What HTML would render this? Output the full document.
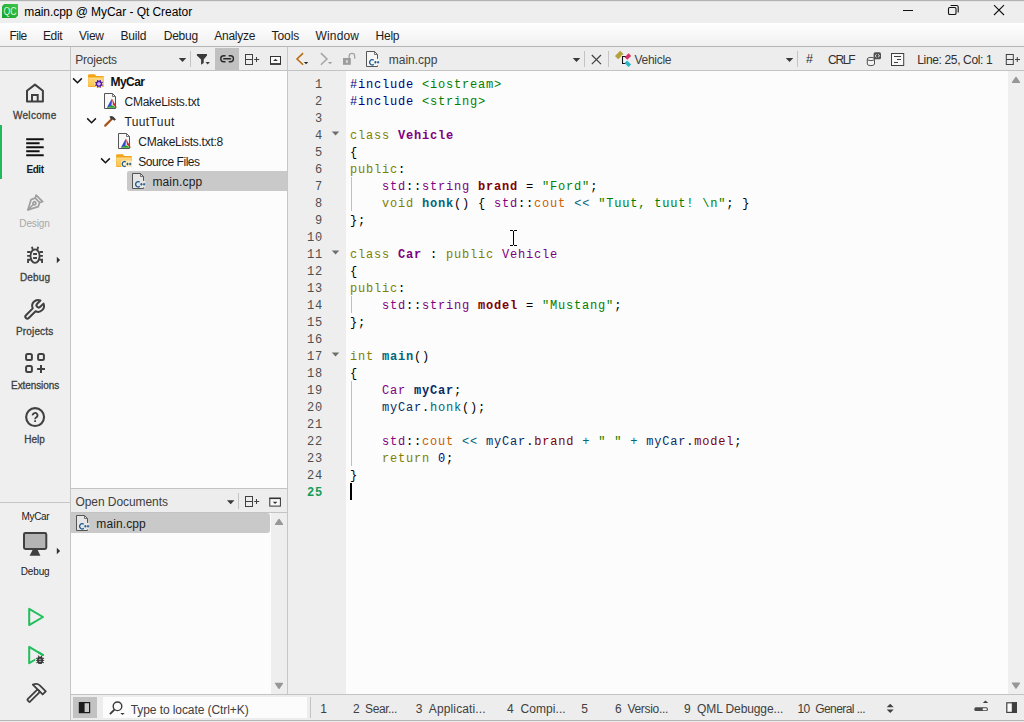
<!DOCTYPE html>
<html>
<head>
<meta charset="utf-8">
<title>main.cpp @ MyCar - Qt Creator</title>
<style>
*{margin:0;padding:0;box-sizing:border-box;}
html,body{width:1024px;height:722px;overflow:hidden;background:#efefef;}
body{position:relative;font-family:"Liberation Sans",sans-serif;font-size:12px;color:#1c1c1c;}
.a{position:absolute;}
.t{position:absolute;white-space:pre;}
svg{position:absolute;overflow:visible;}
.ln{position:absolute;left:288px;width:35px;text-align:right;font-family:"Liberation Mono",monospace;font-size:12px;letter-spacing:0.8px;line-height:17px;height:17px;color:#4f4f4f;white-space:pre;}
.cl{position:absolute;left:350px;font-family:"Liberation Mono",monospace;font-size:12px;letter-spacing:0.8px;line-height:17px;height:17px;color:#000000;white-space:pre;}
.cl b{font-weight:bold;}
.k{color:#808000;}.p{color:#000080;}.s{color:#008000;}.ty{color:#800080;}.f{color:#00677c;}.fl{color:#800000;}.g{color:#ce5c00;}.lo{color:#092e64;}.n{color:#000080;}
</style>
</head>
<body>
<div class="a" style="left:0px;top:0px;width:1024px;height:23px;background:#eeeeee;"></div>
<div class="a" style="left:0px;top:0px;width:1024px;height:1px;background:#b2b2b2;"></div>
<div class="a" style="left:0px;top:1px;width:1024px;height:1px;background:#e6e6e6;"></div>
<div class="a" style="left:0px;top:23px;width:1024px;height:23px;background:linear-gradient(#ffffff,#f0f0f0);"></div>
<div class="a" style="left:0px;top:46px;width:1024px;height:1px;background:#b6b6b6;"></div>
<div class="a" style="left:0px;top:47px;width:70px;height:675px;background:#efefef;"></div>
<div class="a" style="left:70px;top:47px;width:1px;height:674px;background:#c6c6c6;"></div>
<div class="a" style="left:71px;top:47px;width:953px;height:23px;background:#ededed;"></div>
<div class="a" style="left:0px;top:70px;width:1024px;height:1px;background:#c3c3c3;"></div>
<div class="a" style="left:215px;top:48px;width:24px;height:22px;background:#c1c1c1;"></div>
<div class="a" style="left:71px;top:71px;width:216px;height:417px;background:#fcfcfc;"></div>
<div class="a" style="left:127px;top:171px;width:160px;height:20px;background:#c9c9c9;border-radius:2px 0 0 2px;"></div>
<div class="a" style="left:71px;top:488px;width:216px;height:1px;background:#c3c3c3;"></div>
<div class="a" style="left:71px;top:489px;width:216px;height:23px;background:#ededed;"></div>
<div class="a" style="left:71px;top:512px;width:216px;height:1px;background:#c3c3c3;"></div>
<div class="a" style="left:71px;top:513px;width:200px;height:181px;background:#fcfcfc;"></div>
<div class="a" style="left:71px;top:513px;width:199px;height:20px;background:#c9c9c9;border-radius:0 3px 3px 0;"></div>
<div class="a" style="left:271px;top:513px;width:16px;height:181px;background:#eeeeee;"></div>
<div class="a" style="left:287px;top:47px;width:1px;height:647px;background:#c6c6c6;"></div>
<div class="a" style="left:288px;top:71px;width:58px;height:623px;background:#eeeeee;"></div>
<div class="a" style="left:346px;top:71px;width:662px;height:623px;background:#fcfcfc;"></div>
<div class="a" style="left:1008px;top:71px;width:16px;height:623px;background:#efefef;"></div>
<div class="a" style="left:71px;top:694px;width:953px;height:1px;background:#c3c3c3;"></div>
<div class="a" style="left:71px;top:695px;width:953px;height:25px;background:#ededed;"></div>
<div class="a" style="left:73px;top:697px;width:24px;height:21px;background:#c2c2c2;"></div>
<div class="a" style="left:103px;top:697px;width:204px;height:21px;background:#fcfcfc;"></div>
<div class="a" style="left:310px;top:697px;width:1px;height:21px;background:#c4c4c4;"></div>
<div class="a" style="left:0px;top:720px;width:1024px;height:1px;background:#b6b6b6;"></div>
<div class="a" style="left:0px;top:721px;width:1024px;height:1px;background:#eaeaea;"></div>
<div class="a" style="left:0px;top:125px;width:2px;height:54px;background:#20b95e;"></div>
<div class="a" style="left:0px;top:502px;width:70px;height:1px;background:#c6c6c6;"></div>
<div class="a" style="left:190px;top:51px;width:1px;height:16px;background:#c4c4c4;"></div>
<div class="a" style="left:584px;top:51px;width:1px;height:16px;background:#c4c4c4;"></div>
<div class="a" style="left:608px;top:51px;width:1px;height:16px;background:#c4c4c4;"></div>
<div class="a" style="left:797px;top:51px;width:1px;height:16px;background:#c4c4c4;"></div>
<div class="a" style="left:238px;top:493px;width:1px;height:16px;background:#c4c4c4;"></div>
<div class="a" style="left:351px;top:177px;width:1px;height:34px;background:#c0c0c0;"></div>
<div class="a" style="left:351px;top:296px;width:1px;height:17px;background:#c0c0c0;"></div>
<div class="a" style="left:351px;top:381px;width:1px;height:85px;background:#c0c0c0;"></div>
<div class="a" style="left:350px;top:483px;width:2px;height:17px;background:#000000;"></div>

<!-- text -->
<div class="t" style="left:24.20px;top:4.84px;font-size:12px;line-height:14px;height:14px;letter-spacing:-0.056px;color:#000;">main.cpp @ MyCar - Qt Creator</div>
<div class="t" style="left:9.40px;top:28.84px;font-size:12px;line-height:14px;height:14px;letter-spacing:-0.481px;">File</div>
<div class="t" style="left:43.00px;top:28.84px;font-size:12px;line-height:14px;height:14px;letter-spacing:-0.396px;">Edit</div>
<div class="t" style="left:79.00px;top:28.84px;font-size:12px;line-height:14px;height:14px;letter-spacing:-0.266px;">View</div>
<div class="t" style="left:120.50px;top:28.84px;font-size:12px;line-height:14px;height:14px;letter-spacing:-0.172px;">Build</div>
<div class="t" style="left:163.70px;top:28.84px;font-size:12px;line-height:14px;height:14px;letter-spacing:-0.219px;">Debug</div>
<div class="t" style="left:214.20px;top:28.84px;font-size:12px;line-height:14px;height:14px;letter-spacing:-0.234px;">Analyze</div>
<div class="t" style="left:271.50px;top:28.84px;font-size:12px;line-height:14px;height:14px;letter-spacing:-0.054px;">Tools</div>
<div class="t" style="left:315.50px;top:28.84px;font-size:12px;line-height:14px;height:14px;letter-spacing:0.163px;">Window</div>
<div class="t" style="left:375.50px;top:28.84px;font-size:12px;line-height:14px;height:14px;letter-spacing:-0.229px;">Help</div>
<div class="t" style="left:75.30px;top:52.84px;font-size:12px;line-height:14px;height:14px;letter-spacing:-0.223px;color:#404040;">Projects</div>
<div class="t" style="left:388.70px;top:52.84px;font-size:12px;line-height:14px;height:14px;letter-spacing:0.014px;color:#404040;">main.cpp</div>
<div class="t" style="left:634.50px;top:52.84px;font-size:12px;line-height:14px;height:14px;letter-spacing:-0.284px;color:#404040;">Vehicle</div>
<div class="t" style="left:806.00px;top:52.17px;font-size:12.5px;line-height:15px;height:15px;color:#303030;">#</div>
<div class="t" style="left:828.00px;top:52.84px;font-size:12px;line-height:14px;height:14px;letter-spacing:-1.281px;color:#303030;">CRLF</div>
<div class="t" style="left:917.30px;top:52.84px;font-size:12px;line-height:14px;height:14px;letter-spacing:-0.355px;color:#303030;">Line: 25, Col: 1</div>
<div class="t" style="left:110.60px;top:74.84px;font-size:12px;line-height:14px;height:14px;font-weight:bold;letter-spacing:-0.572px;color:#111;">MyCar</div>
<div class="t" style="left:124.50px;top:94.84px;font-size:12px;line-height:14px;height:14px;letter-spacing:-0.261px;">CMakeLists.txt</div>
<div class="t" style="left:124.50px;top:114.84px;font-size:12px;line-height:14px;height:14px;letter-spacing:0.380px;">TuutTuut</div>
<div class="t" style="left:138.30px;top:134.84px;font-size:12px;line-height:14px;height:14px;letter-spacing:-0.247px;">CMakeLists.txt:8</div>
<div class="t" style="left:138.30px;top:154.84px;font-size:12px;line-height:14px;height:14px;letter-spacing:-0.446px;">Source Files</div>
<div class="t" style="left:152.40px;top:174.84px;font-size:12px;line-height:14px;height:14px;letter-spacing:0.157px;">main.cpp</div>
<div class="t" style="left:75.50px;top:494.84px;font-size:12px;line-height:14px;height:14px;letter-spacing:-0.069px;color:#404040;">Open Documents</div>
<div class="t" style="left:96.30px;top:516.84px;font-size:12px;line-height:14px;height:14px;letter-spacing:0.114px;">main.cpp</div>
<div class="t" style="left:12.90px;top:109.53px;font-size:10px;line-height:12px;height:12px;letter-spacing:0.317px;color:#404040;-webkit-text-stroke:0.3px #404040;">Welcome</div>
<div class="t" style="left:26.40px;top:163.53px;font-size:10px;line-height:12px;height:12px;font-weight:bold;letter-spacing:-0.430px;color:#1a1a1a;">Edit</div>
<div class="t" style="left:19.30px;top:217.53px;font-size:10px;line-height:12px;height:12px;letter-spacing:-0.128px;color:#a8a8a8;">Design</div>
<div class="t" style="left:20.00px;top:271.54px;font-size:10px;line-height:12px;height:12px;letter-spacing:0.133px;color:#404040;-webkit-text-stroke:0.3px #404040;">Debug</div>
<div class="t" style="left:16.00px;top:325.54px;font-size:10px;line-height:12px;height:12px;letter-spacing:0.154px;color:#404040;-webkit-text-stroke:0.3px #404040;">Projects</div>
<div class="t" style="left:11.10px;top:379.54px;font-size:10px;line-height:12px;height:12px;letter-spacing:-0.091px;color:#404040;-webkit-text-stroke:0.3px #404040;">Extensions</div>
<div class="t" style="left:24.20px;top:433.54px;font-size:10px;line-height:12px;height:12px;letter-spacing:0.041px;color:#404040;-webkit-text-stroke:0.3px #404040;">Help</div>
<div class="t" style="left:21.50px;top:510.54px;font-size:10px;line-height:12px;height:12px;letter-spacing:-0.338px;color:#1a1a1a;">MyCar</div>
<div class="t" style="left:20.80px;top:565.53px;font-size:10px;line-height:12px;height:12px;letter-spacing:-0.167px;color:#1a1a1a;">Debug</div>
<div class="t" style="left:130.70px;top:702.84px;font-size:12px;line-height:14px;height:14px;letter-spacing:-0.078px;color:#404040;">Type to locate (Ctrl+K)</div>
<div class="t" style="left:320.30px;top:701.84px;font-size:12px;line-height:14px;height:14px;color:#404040;">1</div>
<div class="t" style="left:353.00px;top:701.84px;font-size:12px;line-height:14px;height:14px;letter-spacing:-0.415px;color:#404040;">2  Sear...</div>
<div class="t" style="left:415.80px;top:701.84px;font-size:12px;line-height:14px;height:14px;letter-spacing:0.125px;color:#404040;">3  Applicati...</div>
<div class="t" style="left:507.00px;top:701.84px;font-size:12px;line-height:14px;height:14px;letter-spacing:0.067px;color:#404040;">4  Compi...</div>
<div class="t" style="left:581.30px;top:701.84px;font-size:12px;line-height:14px;height:14px;color:#404040;">5</div>
<div class="t" style="left:615.00px;top:701.84px;font-size:12px;line-height:14px;height:14px;letter-spacing:-0.309px;color:#404040;">6  Versio...</div>
<div class="t" style="left:684.00px;top:701.84px;font-size:12px;line-height:14px;height:14px;letter-spacing:-0.103px;color:#404040;">9  QML Debugge...</div>
<div class="t" style="left:797.50px;top:701.84px;font-size:12px;line-height:14px;height:14px;letter-spacing:-0.575px;color:#404040;">10  General ...</div>
<svg width="1024" height="722" viewBox="0 0 1024 722" style="left:0;top:0;">
<defs><linearGradient id="qcg" x1="0" y1="1" x2="1" y2="0"><stop offset="0" stop-color="#17a02b"/><stop offset="1" stop-color="#3cc84a"/></linearGradient><linearGradient id="fold" x1="0" y1="0" x2="0" y2="1"><stop offset="0" stop-color="#fcd67c"/><stop offset="1" stop-color="#fbc451"/></linearGradient></defs>
<path d="M4.2 4 H18 V15.6 L15.6 18 H2 V6.2 Z" fill="url(#qcg)"/>
<text x="3.6" y="15.2" font-family="Liberation Sans" font-size="10.5" fill="#d9f7dc" textLength="13" lengthAdjust="spacingAndGlyphs">QC</text>
<path d="M903 10.5 H913" stroke="#111" stroke-width="1" fill="none"/>
<rect x="948.5" y="7.5" width="7.5" height="7" rx="1.3" fill="none" stroke="#111" stroke-width="1.1"/>
<path d="M950.6 5.5 H956.6 Q958.2 5.5 958.2 7.1 V12.6" fill="none" stroke="#111" stroke-width="1.1"/>
<path d="M994 5.2 L1004 15 M1004 5.2 L994 15" stroke="#111" stroke-width="1.1" fill="none"/>
<path d="M178.75 58.10 H186.25 L182.50 62.10 Z" fill="#3a3a3a"/>
<path d="M196.9 54 H207 V55.6 L203.7 59.4 V63 L201.1 64.8 V59.4 L196.9 55.6 Z" fill="#3a3a3a"/>
<path d="M205.50 62.00 H209.90 L207.70 64.40 Z" fill="#3a3a3a"/>
<path d="M225.5 55.8 H223.7 A2.95 2.95 0 0 0 223.7 61.7 H225.5 M228.7 55.8 H230.5 A2.95 2.95 0 0 1 230.5 61.7 H228.7" fill="none" stroke="#2a2a2a" stroke-width="1.4"/>
<path d="M223.9 58.75 H230.4" stroke="#2a2a2a" stroke-width="1.7" stroke-linecap="round" fill="none"/>
<rect x="245.5" y="54.5" width="7" height="10" fill="none" stroke="#404040" stroke-width="1"/><path d="M245.5 59.5 H252.5 M254.2 59.5 H259.2 M256.5 57 V62" stroke="#404040" stroke-width="1" fill="none"/>
<rect x="270.5" y="56.5" width="10" height="7.5" fill="#fafafa" stroke="#333" stroke-width="1"/><path d="M270 64 H281" stroke="#333" stroke-width="1.6"/>
<path d="M273.20 61.00 H277.80 L275.50 58.80 Z" fill="#333"/>
<path d="M303.1 53.1 L297 59 L303.1 64.8" fill="none" stroke="#b9680f" stroke-width="1.5"/>
<path d="M303.90 61.90 H308.30 L306.10 64.30 Z" fill="#2a2a2a"/>
<path d="M320.9 53.1 L327 59 L320.9 64.8" fill="none" stroke="#a4a4a4" stroke-width="1.5"/>
<path d="M327.90 61.90 H332.30 L330.10 64.30 Z" fill="#a4a4a4"/>
<rect x="343" y="58" width="7.8" height="6.8" fill="#9c9c9c"/><rect x="346" y="60" width="1.8" height="3" fill="#d8d8d8"/>
<path d="M349.2 58 V56.2 A2.75 2.75 0 0 1 354.7 56.2 V58.8" fill="none" stroke="#a4a4a4" stroke-width="1.3"/>
<path d="M366.5 51.5 H374.5 L377.5 54.5 V66.5 H366.5 Z" fill="#f6f6f6" stroke="#555" stroke-width="1"/><path d="M374.5 51.5 V54.5 H377.5" fill="none" stroke="#555" stroke-width="0.8"/><rect x="369.7" y="58.9" width="9.6" height="6.6" fill="#f6f6f6"/><path d="M373.70 60.30 A2.4 2.7 0 1 0 373.70 64.30" fill="none" stroke="#1f5a8e" stroke-width="1.25"/><path d="M374.2 62.3 H376.5 M375.4 61.1 V63.5 M376.9 62.3 H379.2 M378.1 61.1 V63.5" stroke="#1f5a8e" stroke-width="1.05" fill="none"/>
<path d="M572.75 58.10 H580.25 L576.50 62.10 Z" fill="#3a3a3a"/>
<path d="M591.8 55 L601 64.2 M601 55 L591.8 64.2" stroke="#404040" stroke-width="1.2" fill="none"/>
<rect x="-3.7" y="-2.3" width="7.4" height="4.6" fill="#b3a33c" transform="translate(619.2 55) rotate(-45)"/>
<rect x="621" y="55.4" width="7" height="9" fill="#f4f4f4"/>
<path d="M627 56.5 H622.5 V63.5 H626" fill="none" stroke="#111" stroke-width="1.1"/>
<rect x="-2.8" y="-1.8" width="5.6" height="3.6" fill="#d6336c" transform="translate(627.9 56.6) rotate(-45)"/>
<rect x="-2.8" y="-1.8" width="5.6" height="3.6" fill="#27b3c8" transform="translate(627.8 63.7) rotate(45)"/>
<path d="M785.75 58.10 H793.25 L789.50 62.10 Z" fill="#3a3a3a"/>
<path d="M867.3 59 V64 A3.6 1.6 0 0 0 874.5 64 V59" fill="#f4f4f4" stroke="#505050" stroke-width="1"/><ellipse cx="870.9" cy="59" rx="3.6" ry="1.6" fill="#f4f4f4" stroke="#505050" stroke-width="1"/>
<rect x="873.6" y="52.3" width="7.4" height="7" rx="1.6" fill="#505050"/><path d="M876.6 54.3 L875 55.8 L876.6 57.3 M878 54.3 L879.6 55.8 L878 57.3" fill="none" stroke="#f4f4f4" stroke-width="0.9"/>
<rect x="891.5" y="53.5" width="12.2" height="12" fill="#f8f8f8" stroke="#404040" stroke-width="1"/><path d="M894 56.5 H901 M897 59.5 H901 M894 62.5 H898" stroke="#404040" stroke-width="1" fill="none"/>
<rect x="1006.3" y="54.5" width="7" height="10" fill="none" stroke="#404040" stroke-width="1"/><path d="M1006.3 59.5 H1013.3 M1015.0 59.5 H1020.0 M1017.3 57 V62" stroke="#404040" stroke-width="1" fill="none"/>
<path d="M27 101.6 V90.8 L34.95 84.6 L42.9 90.8 V101.6 Z" fill="none" stroke="#404040" stroke-width="2" stroke-linejoin="round"/>
<path d="M32 101.6 V94.9 H37.7 V101.6" fill="none" stroke="#404040" stroke-width="2" stroke-linejoin="miter"/>
<path d="M26.2 139.2 H43.7 M26.2 143.2 H39.6 M26.2 147.2 H43.7 M26.2 151.2 H39.6 M26.2 155.2 H43.7" stroke="#101010" stroke-width="1.9" fill="none"/>
<g transform="translate(33.3 204.35) rotate(45)" fill="none" stroke="#9e9e9e" stroke-width="1.7" stroke-linejoin="round" stroke-linecap="round"><path d="M-4.5 -8.5 H4.7 L3.2 -5.8 H-3.1 Z"/><path d="M-3.1 -5.8 L-4.9 -1.8 L0.1 7.7 L5.1 -1.9 L3.2 -5.8"/><path d="M0.1 7.4 V0.2" stroke-width="1.5"/><circle cx="0.1" cy="-1.5" r="1.5"/></g>
<g transform="translate(35.05 256.00) scale(1.000)" fill="none" stroke="#404040" stroke-width="1.85"><ellipse cx="0" cy="0.1" rx="4.55" ry="6.75"/><path d="M-2.3 -6.3 L-3.1 -9.3 M2.3 -6.3 L3.1 -9.3"/><path d="M-4.4 -4 H-7.9 M-4.8 -0.1 H-7.9 M-4.3 3.7 H-7 V7.1 M4.4 -4 H7.9 M4.8 -0.1 H7.9 M4.3 3.7 H7 V7.1" /><path d="M-1.9 -2 H1.9 M-1.9 2 H1.9" stroke-width="1.85"/></g>
<path d="M56.80 256.80 V263.20 L60.10 260.00 Z" fill="#303030"/>
<g transform="translate(38.1 305.9) rotate(45)" fill="none" stroke="#404040" stroke-width="2" stroke-linejoin="round" stroke-linecap="round"><path d="M-2 5.55 V15.2 A2 2 0 0 0 2 15.2 V5.55 A5.9 5.9 0 0 0 2.2 -5.47 V-0.9 A2.2 2.2 0 0 1 -2.2 -0.9 V-5.47 A5.9 5.9 0 0 0 -2 5.55 Z"/></g>
<g fill="none" stroke="#404040" stroke-width="2"><rect x="26.1" y="353.9" width="5.8" height="6" rx="1.5"/><rect x="38.1" y="353.9" width="5.8" height="6" rx="1.5"/><rect x="26.1" y="366.0" width="5.8" height="5.9" rx="1.5"/><path d="M37.1 369 H45 M41 365 V372.9"/></g>
<circle cx="35.1" cy="417.1" r="8.95" fill="none" stroke="#404040" stroke-width="2.1"/>
<path d="M32.7 415.4 A2.4 2.3 0 1 1 36.4 417.2 Q35.1 418 35.1 419.3" fill="none" stroke="#404040" stroke-width="1.8"/><rect x="34.2" y="420.3" width="1.8" height="1.7" fill="#404040"/>
<rect x="24" y="533" width="22.3" height="16" rx="1.4" fill="#b4b4b4" stroke="#404040" stroke-width="2"/><path d="M32.7 549.8 H37.6 L40.4 555.8 H29.6 Z" fill="#404040"/>
<path d="M56.80 547.80 V554.20 L60.10 551.00 Z" fill="#303030"/>
<path d="M29.2 608.9 V625.1 L43 617 Z" fill="none" stroke="#1fbf5a" stroke-width="2" stroke-linejoin="round"/>
<path d="M43 655.05 L29.2 646.9 V663.2 L35.4 659.5" fill="none" stroke="#1fbf5a" stroke-width="2" stroke-linejoin="round" stroke-linecap="round"/>
<rect x="35.4" y="655.2" width="9.6" height="9.6" fill="#efefef"/>
<path d="M43 655.05 L38.6 652.45" fill="none" stroke="#1fbf5a" stroke-width="2" stroke-linecap="round"/>
<g stroke="#333" fill="none" stroke-width="1"><rect x="37.8" y="657.1" width="4.6" height="6.4" rx="1.6" fill="#333"/><path d="M36.1 658.3 H37.8 M36.1 660.4 H37.8 M36.3 662.8 L37.8 662.2 M42.4 658.3 H44.1 M42.4 660.4 H44.1 M43.9 662.8 L42.4 662.2"/><path d="M38.9 657.2 L38.3 655.5 M41.3 657.2 L41.9 655.5"/><path d="M38.9 659.3 H41.3 M38.9 661.4 H41.3" stroke="#efefef" stroke-width="0.7"/></g>
<g transform="translate(36.5 692.8) rotate(45)" fill="none" stroke="#404040" stroke-width="1.8" stroke-linejoin="round"><rect x="-1.7" y="-3.2" width="3.4" height="14.8" rx="0.8"/><path d="M-8.4 -3.2 H5.5 V-7.6 H-3 Q-6.4 -7.4 -8.4 -3.2 Z"/></g>
<path d="M73.10 78.40 L77.45 82.70 L81.80 78.40" fill="none" stroke="#151515" stroke-width="1.5"/>
<path d="M87.20 118.40 L91.55 122.70 L95.90 118.40" fill="none" stroke="#151515" stroke-width="1.5"/>
<path d="M101.10 158.40 L105.45 162.70 L109.80 158.40" fill="none" stroke="#151515" stroke-width="1.5"/>
<path d="M88.0 75.6 Q88.0 74.2 89.4 74.2 H94.7 L96.3 76.1 H102.8 Q103.8 76.1 103.8 77.1 V86.0 Q103.8 87.0 102.8 87.0 H89.0 Q88.0 87.0 88.0 86.0 Z" fill="#f1a415"/><rect x="88.2" y="77.7" width="15.4" height="8.6" fill="url(#fold)"/><rect x="88.2" y="77.7" width="15.4" height="0.5" fill="#fde39c"/>
<g transform="translate(98.95 83.80)" stroke="#4d12a8" fill="none"><circle r="4.5" fill="#fde9a8" stroke="none"/><circle r="2.35" stroke-width="1.4" fill="#ffffff"/><path d="M0 -2.6 V-4.0" stroke-width="1.35" transform="rotate(22)"/><path d="M0 -2.6 V-4.0" stroke-width="1.35" transform="rotate(67)"/><path d="M0 -2.6 V-4.0" stroke-width="1.35" transform="rotate(112)"/><path d="M0 -2.6 V-4.0" stroke-width="1.35" transform="rotate(157)"/><path d="M0 -2.6 V-4.0" stroke-width="1.35" transform="rotate(202)"/><path d="M0 -2.6 V-4.0" stroke-width="1.35" transform="rotate(247)"/><path d="M0 -2.6 V-4.0" stroke-width="1.35" transform="rotate(292)"/><path d="M0 -2.6 V-4.0" stroke-width="1.35" transform="rotate(337)"/><circle r="0.65" fill="#4d12a8" stroke="none"/></g>
<path d="M104.5 93.5 H112.5 L115.5 96.5 V108.5 H104.5 Z" fill="#f8f8f8" stroke="#555" stroke-width="1"/><path d="M112.5 93.5 V96.5 H115.5" fill="none" stroke="#555" stroke-width="0.8"/><path d="M111.9 98.4 L106.8 107.8 L111.6 105.7 L111.9 101.4 Z" fill="#3448cf"/><path d="M111.9 98.4 L117.0 107.8 L112.8 104.7 L112.4 101.4 Z" fill="#d02a2a"/><path d="M106.8 107.8 L117.0 107.8 L111.9 105.3 Z" fill="#22a022"/><path d="M112.2 101.6 L112.8 104.1 L111.7 105.1 Z" fill="#dcdcdc"/>
<path d="M118.5 133.5 H126.5 L129.5 136.5 V148.5 H118.5 Z" fill="#f8f8f8" stroke="#555" stroke-width="1"/><path d="M126.5 133.5 V136.5 H129.5" fill="none" stroke="#555" stroke-width="0.8"/><path d="M125.9 138.4 L120.8 147.8 L125.6 145.7 L125.9 141.4 Z" fill="#3448cf"/><path d="M125.9 138.4 L131.0 147.8 L126.8 144.7 L126.4 141.4 Z" fill="#d02a2a"/><path d="M120.8 147.8 L131.0 147.8 L125.9 145.3 Z" fill="#22a022"/><path d="M126.2 141.6 L126.8 144.1 L125.7 145.1 Z" fill="#dcdcdc"/>
<path d="M105.2 125.6 L112.6 118.2" stroke="#a4541c" stroke-width="2.2" stroke-linecap="round" fill="none"/>
<path d="M109.4 116.6 Q111.6 115.2 113.6 117 L116 119.4 L114.2 120.8 L112.4 119 L111.2 119.9 Z" fill="#3e3e3e"/>
<path d="M116.1 155.6 Q116.1 154.2 117.5 154.2 H122.8 L124.4 156.1 H130.9 Q131.9 156.1 131.9 157.1 V166.0 Q131.9 167.0 130.9 167.0 H117.1 Q116.1 167.0 116.1 166.0 Z" fill="#f1a415"/><rect x="116.3" y="157.7" width="15.4" height="8.6" fill="url(#fold)"/><rect x="116.3" y="157.7" width="15.4" height="0.5" fill="#fde39c"/>
<rect x="121" y="160.6" width="11.2" height="6.4" rx="1.5" fill="#fdeec4"/>
<path d="M125.80 162.10 A2.2 2.5 0 1 0 125.80 165.90" fill="none" stroke="#1f5a8e" stroke-width="1.25"/><path d="M126.3 164.0 H128.6 M127.5 162.8 V165.2 M129.0 164.0 H131.3 M130.2 162.8 V165.2" stroke="#1f5a8e" stroke-width="1.05" fill="none"/>
<path d="M132.5 173.5 H140.5 L143.5 176.5 V188.5 H132.5 Z" fill="#e6e6e6" stroke="#555" stroke-width="1"/><path d="M140.5 173.5 V176.5 H143.5" fill="none" stroke="#555" stroke-width="0.8"/><rect x="135.7" y="180.9" width="9.6" height="6.6" fill="#e6e6e6"/><path d="M139.70 182.30 A2.4 2.7 0 1 0 139.70 186.30" fill="none" stroke="#1f5a8e" stroke-width="1.25"/><path d="M140.2 184.3 H142.5 M141.3 183.1 V185.5 M142.9 184.3 H145.2 M144.1 183.1 V185.5" stroke="#1f5a8e" stroke-width="1.05" fill="none"/>
<path d="M226.95 500.20 H234.45 L230.70 504.20 Z" fill="#3a3a3a"/>
<rect x="245.5" y="496.5" width="7" height="10" fill="none" stroke="#404040" stroke-width="1"/><path d="M245.5 501.5 H252.5 M254.2 501.5 H259.2 M256.5 499.0 V504.0" stroke="#404040" stroke-width="1" fill="none"/>
<rect x="269.8" y="498.5" width="10.6" height="7.6" fill="#fafafa" stroke="#333" stroke-width="1"/><path d="M269.3 498.3 H280.9" stroke="#333" stroke-width="1.6"/>
<path d="M272.80 501.80 H277.40 L275.10 504.00 Z" fill="#333"/>
<path d="M76.5 515.5 H84.5 L87.5 518.5 V530.5 H76.5 Z" fill="#e6e6e6" stroke="#555" stroke-width="1"/><path d="M84.5 515.5 V518.5 H87.5" fill="none" stroke="#555" stroke-width="0.8"/><rect x="79.7" y="522.9" width="9.6" height="6.6" fill="#e6e6e6"/><path d="M83.70 524.30 A2.4 2.7 0 1 0 83.70 528.30" fill="none" stroke="#1f5a8e" stroke-width="1.25"/><path d="M84.2 526.3 H86.5 M85.3 525.1 V527.5 M86.9 526.3 H89.2 M88.0 525.1 V527.5" stroke="#1f5a8e" stroke-width="1.05" fill="none"/>
<path d="M275.60 524.40 L282.40 524.40 L279.00 519.50 Z" fill="#979797" stroke="#979797" stroke-width="1.4" stroke-linejoin="round"/>
<path d="M275.60 683.40 L282.40 683.40 L279.00 688.30 Z" fill="#979797" stroke="#979797" stroke-width="1.4" stroke-linejoin="round"/>
<path d="M1012.60 82.40 L1019.40 82.40 L1016.00 77.50 Z" fill="#979797" stroke="#979797" stroke-width="1.4" stroke-linejoin="round"/>
<path d="M1012.60 683.20 L1019.40 683.20 L1016.00 688.10 Z" fill="#979797" stroke="#979797" stroke-width="1.4" stroke-linejoin="round"/>
<path d="M331.75 131.50 H339.25 L335.50 135.50 Z" fill="#6e6e6e"/>
<path d="M331.75 250.50 H339.25 L335.50 254.50 Z" fill="#6e6e6e"/>
<path d="M331.75 352.50 H339.25 L335.50 356.50 Z" fill="#6e6e6e"/>
<rect x="79.4" y="702.6" width="10.2" height="10" fill="#c9c9c9" stroke="#1c1c1c" stroke-width="1.2"/><rect x="79" y="702.2" width="5.6" height="10.8" fill="#1c1c1c"/>
<circle cx="117.5" cy="706.3" r="4.3" fill="none" stroke="#3a3a3a" stroke-width="1.4"/><path d="M114.4 709.6 L109.9 714.2" stroke="#3a3a3a" stroke-width="1.9" fill="none"/>
<path d="M120.30 712.90 H124.70 L122.50 715.10 Z" fill="#3a3a3a"/>
<path d="M886.70 707.30 H893.70 L890.20 703.70 Z" fill="#404040"/>
<path d="M886.70 709.50 H893.70 L890.20 713.10 Z" fill="#404040"/>
<rect x="974.3" y="707.3" width="13.6" height="3.8" rx="1.6" fill="#4a4a4a"/><rect x="982.6" y="708.2" width="4.2" height="2" rx="0.8" fill="#f4f4f4"/>
<path d="M982.80 702.90 H988.20 L985.50 700.50 Z" fill="#404040"/>
<rect x="1006.8" y="702.8" width="9.6" height="9.6" fill="#fafafa" stroke="#404040" stroke-width="1.2"/><rect x="1011.8" y="702.2" width="5.2" height="10.8" fill="#404040"/>
<g fill="#000" shape-rendering="crispEdges"><rect x="510" y="230" width="3" height="1"/><rect x="514" y="230" width="3" height="1"/><rect x="513" y="231" width="1" height="14"/><rect x="510" y="245" width="3" height="1"/><rect x="514" y="245" width="3" height="1"/></g>
</svg>

<div class="ln" style="top:77px;">1</div>
<div class="cl" style="top:77px;"><span class="p">#include</span> <span class="s">&lt;iostream&gt;</span></div>
<div class="ln" style="top:94px;">2</div>
<div class="cl" style="top:94px;"><span class="p">#include</span> <span class="s">&lt;string&gt;</span></div>
<div class="ln" style="top:111px;">3</div>
<div class="ln" style="top:128px;">4</div>
<div class="cl" style="top:128px;"><span class="k">class</span> <b class="ty">Vehicle</b></div>
<div class="ln" style="top:145px;">5</div>
<div class="cl" style="top:145px;">{</div>
<div class="ln" style="top:162px;">6</div>
<div class="cl" style="top:162px;"><span class="k">public</span>:</div>
<div class="ln" style="top:179px;">7</div>
<div class="cl" style="top:179px;">    <span class="ty">std</span>::<span class="ty">string</span> <b class="fl">brand</b> = <span class="s">"Ford"</span>;</div>
<div class="ln" style="top:196px;">8</div>
<div class="cl" style="top:196px;">    <span class="k">void</span> <b class="f">honk</b>() { <span class="ty">std</span>::<span class="g">cout</span> <span class="f">&lt;&lt;</span> <span class="s">"Tuut, tuut! \n"</span>; }</div>
<div class="ln" style="top:213px;">9</div>
<div class="cl" style="top:213px;">};</div>
<div class="ln" style="top:230px;">10</div>
<div class="ln" style="top:247px;">11</div>
<div class="cl" style="top:247px;"><span class="k">class</span> <b class="ty">Car</b> : <span class="k">public</span> <span class="ty">Vehicle</span></div>
<div class="ln" style="top:264px;">12</div>
<div class="cl" style="top:264px;">{</div>
<div class="ln" style="top:281px;">13</div>
<div class="cl" style="top:281px;"><span class="k">public</span>:</div>
<div class="ln" style="top:298px;">14</div>
<div class="cl" style="top:298px;">    <span class="ty">std</span>::<span class="ty">string</span> <b class="fl">model</b> = <span class="s">"Mustang"</span>;</div>
<div class="ln" style="top:315px;">15</div>
<div class="cl" style="top:315px;">};</div>
<div class="ln" style="top:332px;">16</div>
<div class="ln" style="top:349px;">17</div>
<div class="cl" style="top:349px;"><span class="k">int</span> <b class="f">main</b>()</div>
<div class="ln" style="top:366px;">18</div>
<div class="cl" style="top:366px;">{</div>
<div class="ln" style="top:383px;">19</div>
<div class="cl" style="top:383px;">    <span class="ty">Car</span> <b class="lo">myCar</b>;</div>
<div class="ln" style="top:400px;">20</div>
<div class="cl" style="top:400px;">    <span class="lo">myCar</span>.<span class="f">honk</span>();</div>
<div class="ln" style="top:417px;">21</div>
<div class="ln" style="top:434px;">22</div>
<div class="cl" style="top:434px;">    <span class="ty">std</span>::<span class="g">cout</span> <span class="f">&lt;&lt;</span> <span class="lo">myCar</span>.<span class="fl">brand</span> <span class="f">+</span> <span class="s">" "</span> <span class="f">+</span> <span class="lo">myCar</span>.<span class="fl">model</span>;</div>
<div class="ln" style="top:451px;">23</div>
<div class="cl" style="top:451px;">    <span class="k">return</span> <span class="n">0</span>;</div>
<div class="ln" style="top:468px;">24</div>
<div class="cl" style="top:468px;">}</div>
<div class="ln" style="top:485px;font-weight:bold;color:#149c57;">25</div>

</body>
</html>
